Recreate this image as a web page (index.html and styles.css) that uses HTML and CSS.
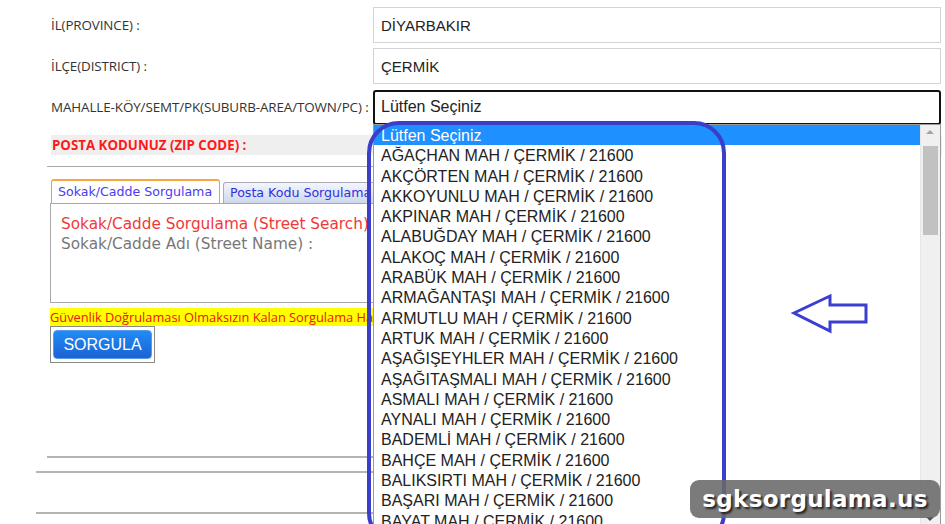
FILE: index.html
```html
<!DOCTYPE html>
<html lang="tr">
<head>
  <meta charset="UTF-8" />
  <meta name="viewport" content="width=device-width, initial-scale=1.0"/>
  <title>Posta Kodu Sorgulama</title>
  <link rel="stylesheet" href="styles.css">
</head>
<body>

  <!-- ana form -->
  <div class="page">
    <div class="form-grid">
      <label class="lbl">İL(PROVINCE) :</label>
      <div class="field">DİYARBAKIR</div>

      <label class="lbl">İLÇE(DISTRICT) :</label>
      <div class="field">ÇERMİK</div>

      <label class="lbl">MAHALLE-KÖY/SEMT/PK(SUBURB-AREA/TOWN/PC) :</label>
      <div class="field select">Lütfen Seçiniz</div>
    </div>

    <div class="zip-row">POSTA KODUNUZ (ZIP CODE) :</div>
    <div class="sep"></div>

    <!-- sekmeler -->
    <div class="tabs">
      <div class="tab active">Sokak/Cadde Sorgulama</div>
      <div class="tab">Posta Kodu Sorgulama</div>
    </div>
    <div class="panel">
      <div class="panel-title">Sokak/Cadde Sorgulama (Street Search)</div>
      <div class="panel-sub">Sokak/Cadde Adı (Street Name) :</div>
    </div>

    <div class="warn">Güvenlik Doğrulaması Olmaksızın Kalan Sorgulama Hakkınız</div>
    <div class="btn-box"><button class="btn">SORGULA</button></div>

    <div class="line line-a"></div>
    <div class="line line-b"></div>
    <div class="line line-c"></div>
  </div>

  <!-- açık seçim listesi -->
  <div class="dropdown">
    <ul class="options">
      <li class="selected">Lütfen Seçiniz</li>
      <li>AĞAÇHAN MAH / ÇERMİK / 21600</li>
      <li>AKÇÖRTEN MAH / ÇERMİK / 21600</li>
      <li>AKKOYUNLU MAH / ÇERMİK / 21600</li>
      <li>AKPINAR MAH / ÇERMİK / 21600</li>
      <li>ALABUĞDAY MAH / ÇERMİK / 21600</li>
      <li>ALAKOÇ MAH / ÇERMİK / 21600</li>
      <li>ARABÜK MAH / ÇERMİK / 21600</li>
      <li>ARMAĞANTAŞI MAH / ÇERMİK / 21600</li>
      <li>ARMUTLU MAH / ÇERMİK / 21600</li>
      <li>ARTUK MAH / ÇERMİK / 21600</li>
      <li>AŞAĞIŞEYHLER MAH / ÇERMİK / 21600</li>
      <li>AŞAĞITAŞMALI MAH / ÇERMİK / 21600</li>
      <li>ASMALI MAH / ÇERMİK / 21600</li>
      <li>AYNALI MAH / ÇERMİK / 21600</li>
      <li>BADEMLİ MAH / ÇERMİK / 21600</li>
      <li>BAHÇE MAH / ÇERMİK / 21600</li>
      <li>BALIKSIRTI MAH / ÇERMİK / 21600</li>
      <li>BAŞARI MAH / ÇERMİK / 21600</li>
      <li>BAYAT MAH / ÇERMİK / 21600</li>
    </ul>
    <div class="scrollbar">
      <span class="arrow-up"></span>
      <span class="thumb"></span>
      <span class="arrow-down"></span>
    </div>
  </div>

  <!-- işaretleme (çerçeve ve ok) -->
  <svg class="marks" width="945" height="524" viewBox="0 0 945 524">
    <rect x="369" y="123" width="355" height="420" rx="30" ry="30" fill="none" stroke="#3b3ec9" stroke-width="4"/>
    <polygon points="794,313 830,296 830,305 866,305 866,322 830,322 830,331" fill="none" stroke="#3b3fd0" stroke-width="3" stroke-linejoin="miter"/>
  </svg>

  <div class="watermark">sgksorgulama.us</div>

</body>
</html>
```

FILE: styles.css
```css
/* genel */
html, body {
  margin: 0;
  padding: 0;
  background: #fff;
}

body {
  width: 945px;
  height: 524px;
  overflow: hidden;
  position: relative;
  font-family: "Open Sans", "Liberation Sans", sans-serif;
  color: #333;
}

.page {
  padding: 7px 4px 0 51px;
}

/* form satırları */
.form-grid {
  display: grid;
  grid-template-columns: 322px 568px;
  grid-auto-rows: 36px;
  row-gap: 5px;
  align-items: center;
}

.lbl {
  font-size: 13.4px;
  color: #333;
  letter-spacing: -0.1px;
  white-space: nowrap;
}

.field {
  height: 36px;
  box-sizing: border-box;
  border: 1px solid #d4d4d4;
  padding: 0 7px;
  display: flex;
  align-items: center;
  font-family: "Liberation Sans", Arial, sans-serif;
  font-size: 15px;
  color: #222;
}

.field.select {
  height: 35px;
  border: 2px solid #111;
  border-radius: 3px;
  padding-left: 6px;
  font-size: 16px;
}

/* posta kodu satırı */
.zip-row {
  margin-top: 10px;
  height: 20px;
  line-height: 20px;
  background: #efefef;
  padding-left: 1px;
  font-size: 13.3px;
  font-weight: bold;
  color: #ff1a1a;
  width: 890px;
}

.sep {
  margin: 11px 0 0 -4px;
  height: 1px;
  background: #a9a9a9;
  width: 894px;
}

/* sekmeler */
.tabs {
  display: flex;
  gap: 3px;
  margin-top: 12px;
  align-items: flex-end;
  font-family: "DejaVu Sans", Verdana, sans-serif;
  font-size: 12.6px;
}

.tab {
  height: 20px;
  line-height: 20px;
  padding: 0 6px;
  border: 1px solid #aab;
  border-bottom: none;
  border-radius: 3px 3px 0 0;
  color: #3030e0;
  background: linear-gradient(#f2f5fc, #cfd8ec);
}

.tab.active {
  height: 22px;
  line-height: 22px;
  border-top: 2px solid #f5a640;
  background: #fff;
  color: #4a3cf0;
  width: 155px;
}

.panel {
  height: 100px;
  border: 1px solid #a8a8a8;
  padding: 10px 0 0 10px;
  font-family: "DejaVu Sans", Verdana, sans-serif;
  font-size: 15.3px;
  line-height: 20px;
  margin-left: -1px;
  box-sizing: border-box;
  width: 891px;
  white-space: nowrap;
}

.panel-title {
  color: #f03838;
}

.panel-sub {
  color: #777;
}

/* uyarı ve buton */
.warn {
  margin: 5px 0 0 -1px;
  height: 18px;
  line-height: 18px;
  background: #ffff00;
  color: #f01010;
  font-size: 12.8px;
  white-space: nowrap;
  width: 891px;
}

.btn-box {
  display: inline-block;
  margin-left: -1px;
  border: 1px solid #8a8a8a;
  padding: 3px 2px 3px 2px;
}

.btn {
  display: block;
  width: 99px;
  height: 29px;
  border: 1px solid #5a9ae8;
  border-radius: 4px;
  background: linear-gradient(#1f8cf5, #1c62d4);
  color: #fff;
  font-family: "Liberation Sans", Arial, sans-serif;
  font-size: 16px;
  padding: 0;
}

/* alt çizgiler */
.line {
  height: 2px;
  background: #b4b4b4;
}

.line-a {
  margin: 93px 0 0 -4px;
}

.line-b {
  margin: 13px 0 0 -15px;
}

.line-c {
  margin: 39px 0 0 -15px;
}

/* açılır liste */
.dropdown {
  position: absolute;
  left: 373px;
  top: 124px;
  width: 568px;
  height: 420px;
  box-sizing: border-box;
  border: 1px solid #9a9a9a;
  background: #fff;
  display: flex;
}

.options {
  list-style: none;
  margin: 0;
  padding: 0;
  flex: 1;
  font-family: "Liberation Sans", Arial, sans-serif;
  font-size: 16px;
  color: #222;
}

.options li {
  height: 20.3px;
  line-height: 21px;
  padding-left: 7px;
  white-space: nowrap;
}

.options li.selected {
  background: #1e90ff;
  color: #fff;
}

.scrollbar {
  width: 19px;
  background: #f0f0f0;
  position: relative;
  border-left: 1px solid #e6e6e6;
}

.arrow-up {
  position: absolute;
  top: 5px;
  left: 5px;
  border: 4px solid transparent;
  border-bottom: 4px solid #a3a3a3;
  border-top: none;
}

.thumb {
  position: absolute;
  top: 21px;
  left: 2px;
  width: 15px;
  height: 89px;
  background: #c1c1c1;
}

.arrow-down {
  position: absolute;
  top: 392px;
  left: 5px;
  border: 4px solid transparent;
  border-top: 4px solid #505050;
  border-bottom: none;
}

/* işaretler */
.marks {
  position: absolute;
  left: 0;
  top: 0;
  pointer-events: none;
}

.watermark {
  position: absolute;
  left: 690px;
  top: 480px;
  width: 250px;
  height: 38px;
  box-sizing: border-box;
  border-radius: 9px;
  background: rgba(105, 105, 105, 0.88);
  color: #fff;
  font-family: "DejaVu Sans", sans-serif;
  font-weight: bold;
  font-size: 23px;
  line-height: 38px;
  text-align: center;
  letter-spacing: 0.3px;
  text-shadow: 2px 2px 2px rgba(0, 0, 0, 0.7);
}
```
